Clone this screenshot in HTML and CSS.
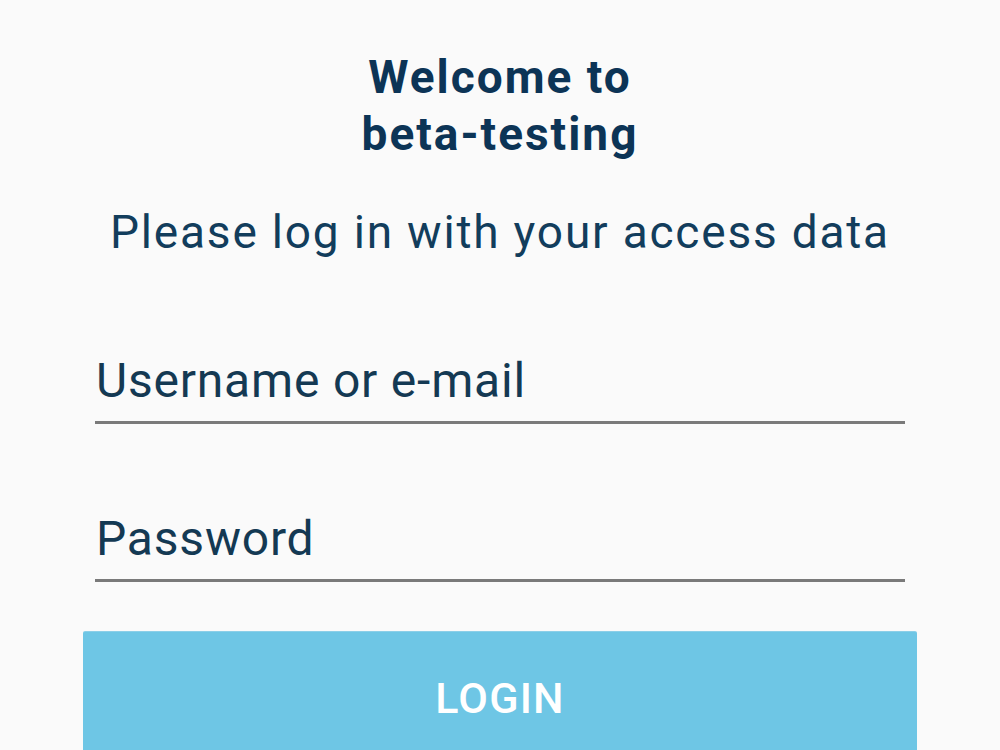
FILE: index.html
```html
<!DOCTYPE html>
<html lang="en">
<head>
<meta charset="utf-8">
<title>Login</title>
<link rel="stylesheet" href="styles.css">
</head>
<body>
<main class="login">
  <h1 class="login__title">Welcome to<br>beta-testing</h1>
  <p class="login__subtitle">Please log in with your access data</p>
  <form class="login__form">
    <label class="field">
      <input class="field__input" type="text" placeholder="Username or e-mail">
    </label>
    <label class="field field--last">
      <input class="field__input" type="password" placeholder="Password">
    </label>
    <button class="login__button" type="button">LOGIN</button>
  </form>
</main>
</body>
</html>
```
FILE: styles.css
```css
html, body {
  margin: 0;
  padding: 0;
  background: #fafafa;
}

body {
  font-family: Roboto, "Noto Sans", sans-serif;
  color: #0f3654;
  overflow: hidden;
  height: 750px;
}

.login {
  display: flex;
  flex-direction: column;
  align-items: center;
  padding-top: 49px;
}

.login__title {
  margin: 0;
  font-size: 46px;
  font-weight: 700;
  line-height: 57px;
  letter-spacing: 2px;
  text-align: center;
  color: #0c3456;
}

.login__subtitle {
  margin: 41px 0 0;
  font-size: 46px;
  font-weight: 400;
  line-height: 56px;
  letter-spacing: 1.8px;
  color: #123d5c;
}

.login__form {
  width: 834px;
  display: flex;
  flex-direction: column;
  align-items: center;
  margin-top: 93px;
}

.field {
  display: block;
  width: 810px;
  border-bottom: 3px solid #7a7a7a;
  margin-bottom: 87px;
}

.field--last {
  margin-bottom: 50px;
}

.field__input {
  display: block;
  width: 100%;
  box-sizing: border-box;
  border: 0;
  background: transparent;
  outline: none;
  padding: 0 0 12px 1px;
  font-family: Roboto, "Noto Sans", sans-serif;
  font-size: 48px;
  line-height: 56px;
  letter-spacing: 0.8px;
  color: #0f3654;
}

.field__input::placeholder {
  color: #143953;
  opacity: 1;
}

.login__button {
  width: 834px;
  height: 140px;
  border: 0;
  border-radius: 2px;
  background: #6ec6e5;
  color: #ffffff;
  font-family: Roboto, "Noto Sans", sans-serif;
  font-size: 43px;
  font-weight: 500;
  letter-spacing: 1.2px;
  padding: 45px 0 0;
  line-height: 1;
  display: flex;
  align-items: flex-start;
  justify-content: center;
  box-shadow: 0 -1px 0 #8ccfe8;
}
```
